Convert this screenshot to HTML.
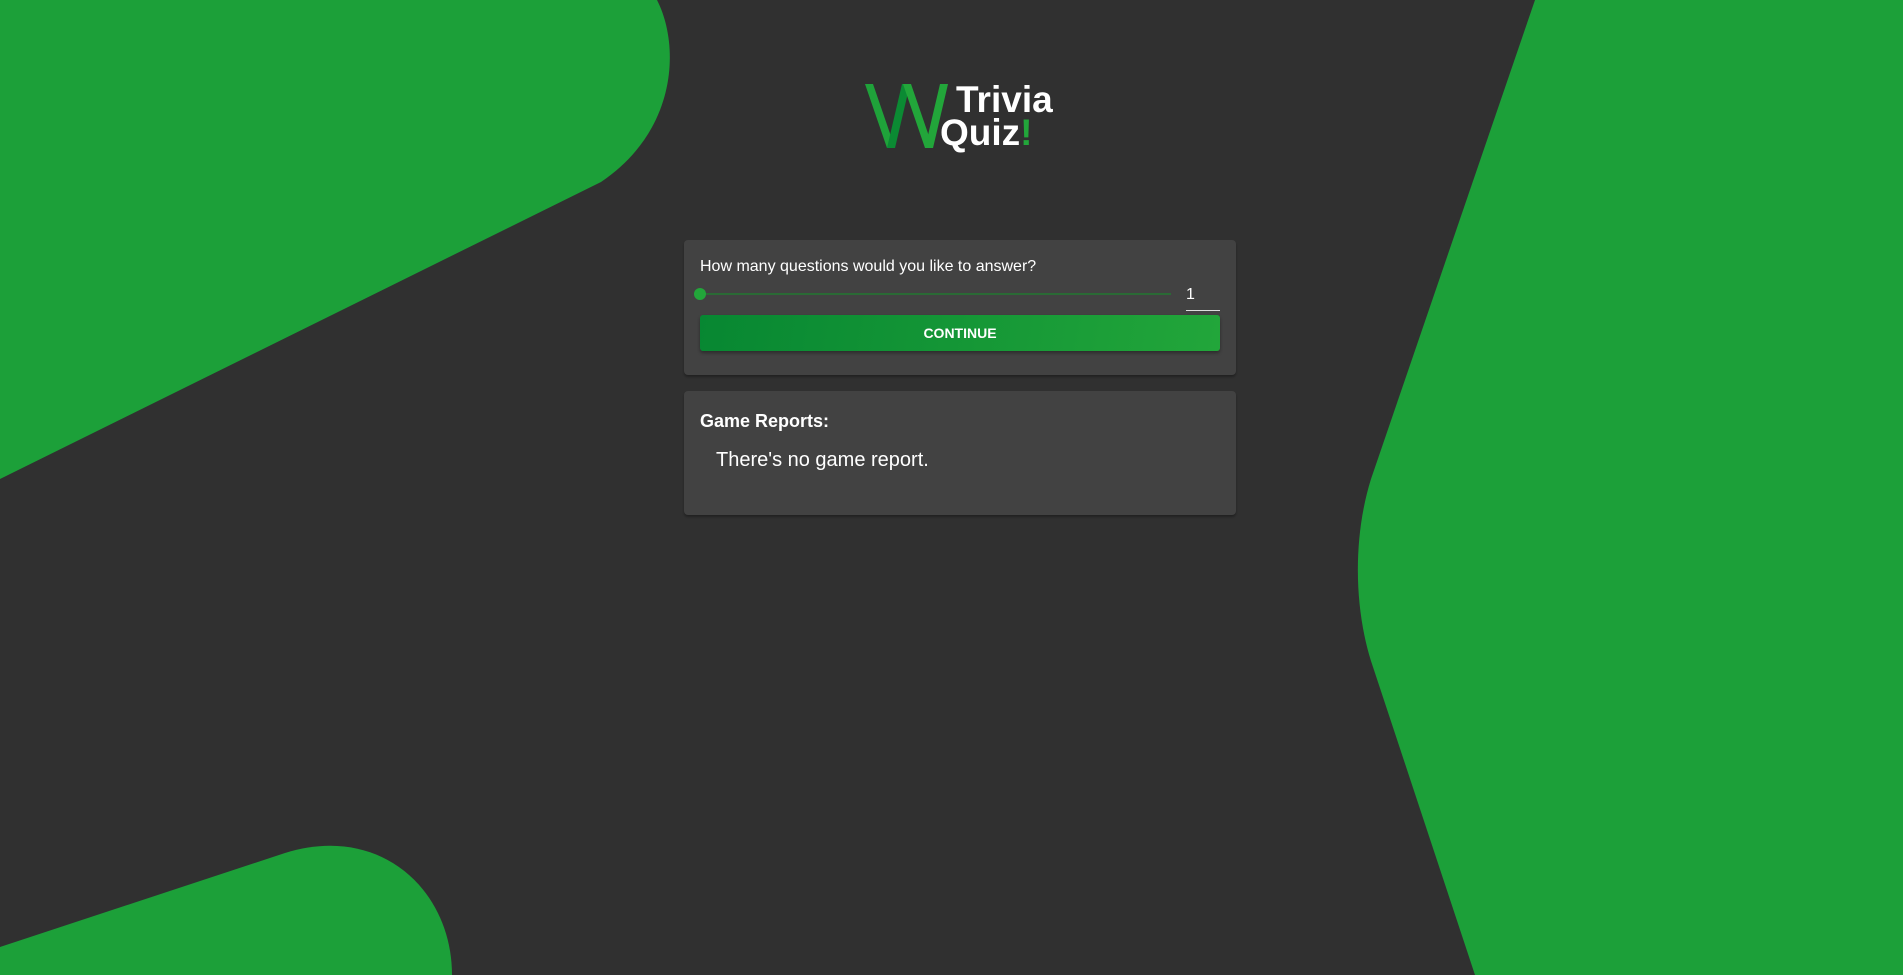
<!DOCTYPE html>
<html><head><meta charset="utf-8"><style>
html,body{margin:0;padding:0;width:1903px;height:975px;overflow:hidden;background:#303030;font-family:"Liberation Sans",sans-serif;color:#fff}
svg.bg{position:absolute;left:0;top:0}
.logo{position:absolute;left:862px;top:78px}
.card{position:absolute;left:684px;width:552px;background:#424242;border-radius:4px;box-shadow:0 2px 2px rgba(0,0,0,.3)}
</style></head><body>
<svg class="bg" width="1903" height="975" viewBox="0 0 1903 975">
<path fill="#1ca039" d="M0 0 L657 0 C680 45 678 130 601 182 L0 479 Z"/>
<path fill="#1ca039" d="M1535 0 L1903 0 L1903 975 L1475 975 L1371 661 C1355 610 1352 540 1371 479 Z"/>
<path fill="#1ca039" d="M0 947 L285 853 C380 823 452 890 452 975 L0 975 Z"/>
</svg>
<svg class="logo" width="200" height="80" viewBox="0 0 200 80">
<polygon points="3,6 11,6 33,70 25,70" fill="#1fa23a"/>
<polygon points="25,70 40,6 48,6 33,70" fill="#0b8a33"/>
<polygon points="41,6 49,6 71,70 63,70" fill="#22a63a"/>
<polygon points="63,70 78,6 86,6 71,70" fill="#22a63a"/>
<text x="94" y="34" font-family="Liberation Sans" font-weight="bold" font-size="37" fill="#fff">Trivia</text>
<text x="78" y="67" font-family="Liberation Sans" font-weight="bold" font-size="37" fill="#fff">Quiz<tspan fill="#22a63a">!</tspan></text>
</svg>
<div class="card" style="top:240px;height:135px">
<div style="position:absolute;left:16px;top:18px;font-size:16px">How many questions would you like to answer?</div>
<div style="position:absolute;left:16px;top:53px;width:471px;height:2px;background:#2a6a35"></div>
<div style="position:absolute;left:10px;top:48px;width:12px;height:12px;border-radius:50%;background:#22a63a"></div>
<div style="position:absolute;left:502px;top:44px;width:34px;height:26px;border-bottom:1px solid #ddd;font-size:16px;line-height:22px">1</div>
<div style="position:absolute;left:16px;top:75px;width:520px;height:36px;border-radius:3px;background:linear-gradient(100deg,#078732,#22a63a);box-shadow:0 2px 3px rgba(0,0,0,.35);font-weight:bold;font-size:14px;text-align:center;line-height:36px">CONTINUE</div>
</div>
<div class="card" style="top:391px;height:124px">
<div style="position:absolute;left:16px;top:20px;font-size:18px;font-weight:bold">Game Reports:</div>
<div style="position:absolute;left:32px;top:58px;font-size:20px">There's no game report.</div>
</div>
</body></html>
